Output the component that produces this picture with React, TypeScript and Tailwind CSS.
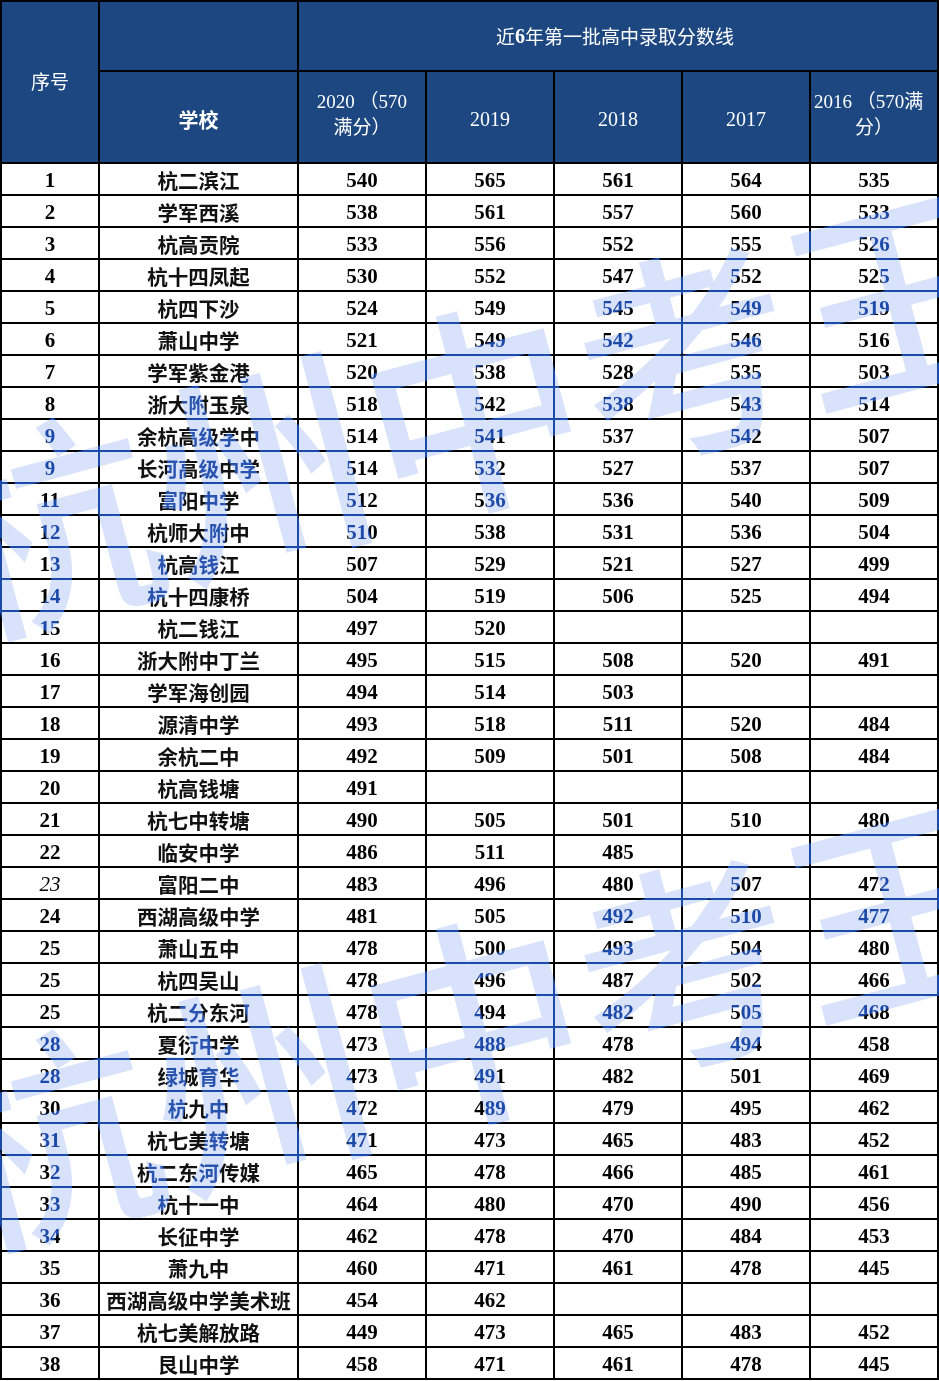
import React from "react";

type Row = [string, string, string, string, string, string, string];

const rows: Row[] = [
  ["1", "杭二滨江", "540", "565", "561", "564", "535"],
  ["2", "学军西溪", "538", "561", "557", "560", "533"],
  ["3", "杭高贡院", "533", "556", "552", "555", "526"],
  ["4", "杭十四凤起", "530", "552", "547", "552", "525"],
  ["5", "杭四下沙", "524", "549", "545", "549", "519"],
  ["6", "萧山中学", "521", "549", "542", "546", "516"],
  ["7", "学军紫金港", "520", "538", "528", "535", "503"],
  ["8", "浙大附玉泉", "518", "542", "538", "543", "514"],
  ["9", "余杭高级学中", "514", "541", "537", "542", "507"],
  ["9", "长河高级中学", "514", "532", "527", "537", "507"],
  ["11", "富阳中学", "512", "536", "536", "540", "509"],
  ["12", "杭师大附中", "510", "538", "531", "536", "504"],
  ["13", "杭高钱江", "507", "529", "521", "527", "499"],
  ["14", "杭十四康桥", "504", "519", "506", "525", "494"],
  ["15", "杭二钱江", "497", "520", "", "", ""],
  ["16", "浙大附中丁兰", "495", "515", "508", "520", "491"],
  ["17", "学军海创园", "494", "514", "503", "", ""],
  ["18", "源清中学", "493", "518", "511", "520", "484"],
  ["19", "余杭二中", "492", "509", "501", "508", "484"],
  ["20", "杭高钱塘", "491", "", "", "", ""],
  ["21", "杭七中转塘", "490", "505", "501", "510", "480"],
  ["22", "临安中学", "486", "511", "485", "", ""],
  ["23", "富阳二中", "483", "496", "480", "507", "472"],
  ["24", "西湖高级中学", "481", "505", "492", "510", "477"],
  ["25", "萧山五中", "478", "500", "493", "504", "480"],
  ["25", "杭四吴山", "478", "496", "487", "502", "466"],
  ["25", "杭二分东河", "478", "494", "482", "505", "468"],
  ["28", "夏衍中学", "473", "488", "478", "494", "458"],
  ["28", "绿城育华", "473", "491", "482", "501", "469"],
  ["30", "杭九中", "472", "489", "479", "495", "462"],
  ["31", "杭七美转塘", "471", "473", "465", "483", "452"],
  ["32", "杭二东河传媒", "465", "478", "466", "485", "461"],
  ["33", "杭十一中", "464", "480", "470", "490", "456"],
  ["34", "长征中学", "462", "478", "470", "484", "453"],
  ["35", "萧九中", "460", "471", "461", "478", "445"],
  ["36", "西湖高级中学美术班", "454", "462", "", "", ""],
  ["37", "杭七美解放路", "449", "473", "465", "483", "452"],
  ["38", "艮山中学", "458", "471", "461", "478", "445"],
];

const serif = "font-['Liberation_Serif','Noto_Sans_CJK_SC',serif]";
const cjk = "font-['Noto_Sans_CJK_SC',sans-serif]";

function Watermark({ top, layer }: { top: string; layer: "screen" | "multiply" }) {
  const base =
    "absolute left-[-61px] whitespace-nowrap leading-none text-[220px] font-medium origin-left rotate-[-15deg] font-['Noto_Sans_CJK_SC',sans-serif] " +
    top;
  const cls =
    layer === "screen"
      ? base + " mix-blend-screen text-[#2053ab]"
      : base + " mix-blend-multiply text-[#d9e2fb]";
  return <div className={cls}>杭州中考王</div>;
}

export default function App() {
  return (
    <div className="relative w-[939px] h-[1381px] bg-white overflow-hidden">
      <div className="grid grid-cols-[96px_197px_126px_126px_126px_126px_126px] grid-rows-[68px_90px_repeat(38,30px)] gap-[2px] p-[2px] bg-black w-[939px]">
        {/* header */}
        <div className={`row-span-2 bg-[#1c4780] text-white flex items-center justify-center text-[19px] ${cjk} pb-[2px]`}>
          序号
        </div>
        <div className="bg-[#1c4780]" />
        <div className={`col-span-5 bg-[#1c4780] text-white flex items-center justify-center text-[19px] ${cjk} pr-[6px]`}>
          近<span className="font-bold font-['Liberation_Serif',serif] text-[20px]">6</span>年第一批高中录取分数线
        </div>
        <div className={`bg-[#1c4780] text-white flex items-center justify-center text-[20px] font-bold ${cjk} pt-[6px]`}>
          学校
        </div>
        <div className={`bg-[#1c4780] text-white flex flex-col items-center justify-center text-[19px] leading-[26px] ${serif} pb-[4px]`}>
          <span>2020 （570</span>
          <span>满分）</span>
        </div>
        <div className={`bg-[#1c4780] text-white flex items-center justify-center text-[20px] ${serif} pt-[4px]`}>
          2019
        </div>
        <div className={`bg-[#1c4780] text-white flex items-center justify-center text-[20px] ${serif} pt-[4px]`}>
          2018
        </div>
        <div className={`bg-[#1c4780] text-white flex items-center justify-center text-[20px] ${serif} pt-[4px]`}>
          2017
        </div>
        <div className={`bg-[#1c4780] text-white flex flex-col items-end justify-center text-[19px] leading-[26px] ${serif} pb-[4px] pr-0`}>
          <span className="whitespace-nowrap self-start pl-[3px]">2016 （570满</span>
          <span className="self-center">分）</span>
        </div>
        {/* body */}
        {rows.map((r, i) => (
          <React.Fragment key={i}>
            <div
              className={`bg-white flex items-center justify-center text-[21px] text-black pt-[3px] ${serif} ${
                r[0] === "23" ? "italic font-normal text-[#333]" : "font-bold"
              }`}
            >
              {r[0]}
            </div>
            <div className={`bg-white flex items-center justify-center text-[20.5px] font-bold text-[#111] whitespace-nowrap pt-[2px] ${cjk}`}>
              {r[1]}
            </div>
            {r.slice(2).map((v, j) => (
              <div
                key={j}
                className={`bg-white flex items-center justify-center text-[21px] font-bold text-black pt-[3px] ${serif}`}
              >
                {v}
              </div>
            ))}
          </React.Fragment>
        ))}
      </div>
      <div className="absolute inset-0 pointer-events-none">
        <Watermark top="top-[433px]" layer="screen" />
        <Watermark top="top-[1045px]" layer="screen" />
        <Watermark top="top-[433px]" layer="multiply" />
        <Watermark top="top-[1045px]" layer="multiply" />
      </div>
    </div>
  );
}
